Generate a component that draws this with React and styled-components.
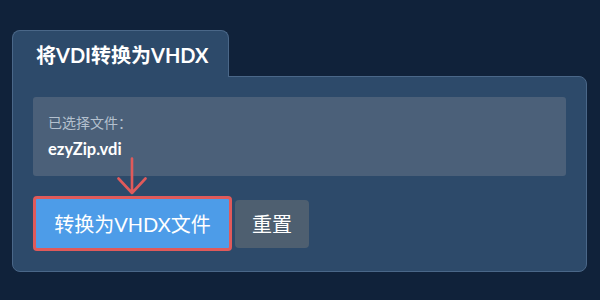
import React from 'react';
import styled, { createGlobalStyle } from 'styled-components';

const GlobalStyle = createGlobalStyle`
  html, body {
    margin: 0;
    padding: 0;
    background: #10223a;
  }
  body {
    font-family: Lato, "Noto Sans CJK SC", sans-serif;
  }
`;

const Page = styled.div`
  width: 600px;
  height: 300px;
  box-sizing: border-box;
  padding: 30px 13px 0 12px;
  background: #10223a;
`;

const Tab = styled.div`
  position: relative;
  z-index: 1;
  width: 217px;
  height: 47px;
  box-sizing: border-box;
  padding: 12px 0 0 23px;
  background: #2d4a6a;
  border: 1px solid #4a6788;
  border-bottom: none;
  border-radius: 8px 8px 0 0;
  color: #ffffff;
  font-size: 20px;
  font-weight: 700;
  line-height: 24px;
`;

const Panel = styled.div`
  margin-top: -1px;
  height: 196px;
  box-sizing: border-box;
  padding: 20px 20px 0 20px;
  background: #2d4a6a;
  border: 1px solid #4a6788;
  border-radius: 0 8px 8px 8px;
`;

const FileBox = styled.div`
  height: 79px;
  box-sizing: border-box;
  padding: 16px 16px 0 15px;
  background: #4b6079;
  border-radius: 3px;
`;

const FileLabel = styled.div`
  color: #b4c0ce;
  font-size: 14px;
  line-height: 20px;
`;

const FileName = styled.div`
  margin-top: 6px;
  color: #ffffff;
  font-size: 16.5px;
  font-weight: 700;
  line-height: 20px;
`;

const Actions = styled.div`
  position: relative;
  display: flex;
  align-items: center;
  gap: 3px;
  margin-top: 20px;
`;

const Arrow = styled.svg`
  position: absolute;
  left: 84px;
  top: -39px;
`;

const ConvertButton = styled.button`
  width: 199px;
  height: 55px;
  box-sizing: border-box;
  background: #4d9ce8;
  border: 3px solid #e05a5a;
  border-radius: 4px;
  color: #ffffff;
  font-size: 20px;
  font-family: Lato, "Noto Sans CJK SC", sans-serif;
  padding: 0;
`;

const ResetButton = styled.button`
  width: 74px;
  height: 48px;
  background: #4e5f70;
  border: none;
  border-radius: 4px;
  color: #ffffff;
  font-size: 20px;
  font-family: Lato, "Noto Sans CJK SC", sans-serif;
  padding: 0;
`;

export default function App() {
  return (
    <>
      <GlobalStyle />
      <Page>
        <Tab>将VDI转换为VHDX</Tab>
        <Panel>
          <FileBox>
            <FileLabel>已选择文件：</FileLabel>
            <FileName>ezyZip.vdi</FileName>
          </FileBox>
          <Actions>
            <Arrow width="30" height="38" viewBox="0 0 30 38">
              <path d="M15 1.5 V36 M1.5 21.5 L15 36 L28.5 21.5" fill="none" stroke="#e05a5a" strokeWidth="2.6" strokeLinecap="round" strokeLinejoin="round" />
            </Arrow>
            <ConvertButton>转换为VHDX文件</ConvertButton>
            <ResetButton>重置</ResetButton>
          </Actions>
        </Panel>
      </Page>
    </>
  );
}
